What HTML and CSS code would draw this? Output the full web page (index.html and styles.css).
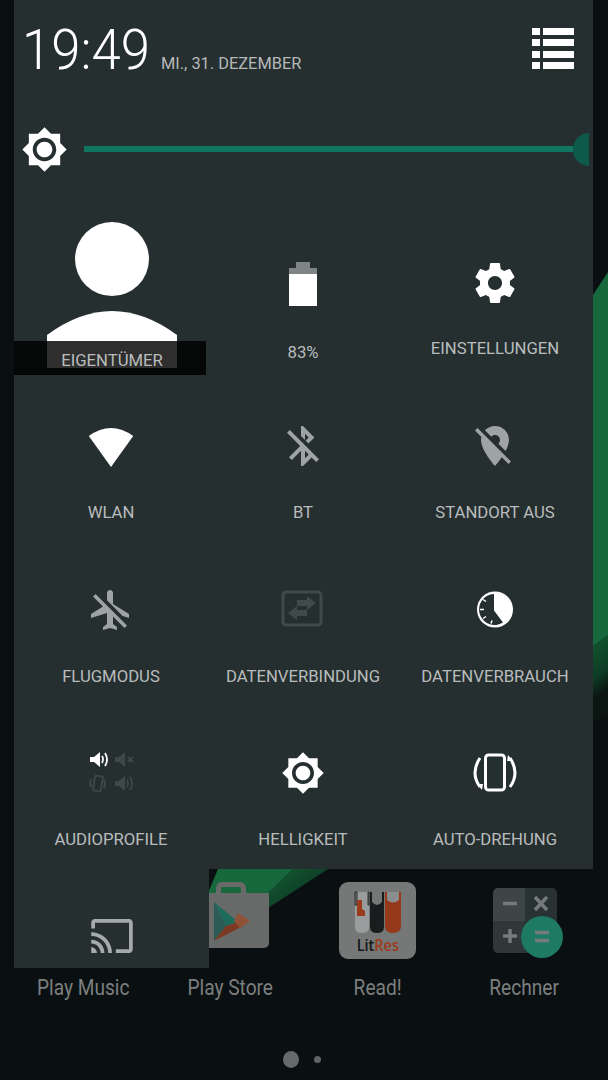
FILE: index.html
```html
<!DOCTYPE html>
<html lang="de">
<head>
<meta charset="utf-8">
<title>Schnelleinstellungen</title>
<link rel="stylesheet" href="styles.css">
</head>
<body>
<div class="screen">
  <svg class="wallpaper" viewBox="0 0 608 1080" width="608" height="1080" aria-hidden="true">
    <defs>
      <linearGradient id="bandShade" gradientUnits="userSpaceOnUse" x1="293" y1="869" x2="320" y2="905">
        <stop offset="0" stop-color="#11522e"/>
        <stop offset=".6" stop-color="#0e3d25"/>
        <stop offset="1" stop-color="#0a1512"/>
      </linearGradient>
    </defs>
    <polygon fill="url(#bandShade)" points="608,635 293,869 268,893 268,908 328,869 608,715"/>
    <polygon fill="#17693d" points="218,869 608,272 608,635 293,869 268,893 208,893"/>
  </svg>

  <main class="home">
    <div class="apps">
      <div class="app">
        <div class="app-icon"></div>
        <span class="app-name">Play Music</span>
      </div>
      <div class="app">
        <div class="app-icon">
          <svg class="store-icon" viewBox="0 0 76 66" width="76" height="66">
            <path class="bag" fill-rule="evenodd" d="M23 11V6a6 6 0 0 1 6-6h18a6 6 0 0 1 6 6v5h23v50a5 5 0 0 1-5 5H0V11zM28 11h20V7a2 2 0 0 0-2-2H30a2 2 0 0 0-2 2z"/>
            <polygon fill="#1d6b5a" points="21,20 45,40 33,44"/>
            <polygon fill="#2c5a55" points="21,20 33,44 21,59"/>
            <polygon fill="#7d3a22" points="21,59 33,44 45,40 50,44"/>
            <polygon fill="#8f5238" points="45,31 57,39 47,46 41,39"/>
          </svg>
        </div>
        <span class="app-name">Play Store</span>
      </div>
      <div class="app">
        <div class="app-icon">
          <div class="litres">
            <svg class="litres-tubes" viewBox="0 0 48 44" width="48" height="44">
              <path fill="#9a9d9d" d="M1 1h14v35q0 6-7 6t-7-6z"/>
              <path fill="#767777" stroke="#2b2e2e" stroke-width="1" d="M1 1v13h2V1zM14 1h1v13h-1z"/>
              <path fill="#9a3c1c" d="M3 9h5v9l3 2v5H3z"/>
              <path fill="#1a1d1e" d="M16 1h14v35q0 6-7 6t-7-6z"/>
              <path fill="#767777" d="M18 1h10v10q-5 6-10 0z"/>
              <path fill="#95391a" d="M31 1h16v34q0 7-8 7t-8-7z"/>
              <path fill="#8a8d8d" d="M33 1h12v8q-6 5-12 0z"/>
            </svg>
            <span class="litres-word">Lit<span class="litres-res">Res</span></span>
          </div>
        </div>
        <span class="app-name">Read!</span>
      </div>
      <div class="app">
        <div class="app-icon">
          <svg class="calc-icon" viewBox="0 0 70 72" width="70" height="72">
            <path fill="#3e4546" d="M5 0h27v33H0V5a5 5 0 0 1 5-5z"/>
            <path fill="#283233" d="M32 0h27a5 5 0 0 1 5 5v28H32z"/>
            <path fill="#2f3738" d="M0 33h32v32H5a5 5 0 0 1-5-5z"/>
            <path fill="#283233" d="M32 33h32v27a5 5 0 0 1-5 5H32z"/>
            <path class="calc-sign" d="M10 15.500h14M42 9l12 13M54 9L42 22M17 41v14M10 48h14"/>
            <circle cx="49" cy="49" r="21" fill="#1e7a62"/>
            <path class="calc-sign" d="M42 44.500h14M42 52.500h14"/>
          </svg>
        </div>
        <span class="app-name">Rechner</span>
      </div>
    </div>
    <div class="pager">
      <span class="dot dot-current"></span>
      <span class="dot"></span>
    </div>
  </main>

  <section class="shade">
    <div class="shade-main">
      <header class="clock-row">
        <span class="time">19:49</span>
        <span class="date">MI., 31. DEZEMBER</span>
        <svg class="list-icon" viewBox="0 0 42 41" width="42" height="41">
          <path d="M0 0h8v7H0zM11 0h31v7H11zM0 11h8v7H0zM11 11h31v7H11zM0 23h8v7H0zM11 23h31v7H11zM0 34h8v7H0zM11 34h31v7H11z"/>
        </svg>
      </header>

      <div class="brightness-row">
        <svg class="sun-icon" viewBox="0 0 24 24" width="47" height="47">
          <path d="M20 8.690V4h-4.690L12 .690 8.690 4H4v4.690L.690 12 4 15.310V20h4.690L12 23.310 15.310 20H20v-4.690L23.310 12 20 8.690zM12 18c-3.310 0-6-2.690-6-6s2.690-6 6-6 6 2.690 6 6-2.690 6-6 6zm0-10c-2.210 0-4 1.790-4 4s1.790 4 4 4 4-1.790 4-4-1.790-4-4-4z"/>
        </svg>
        <div class="track"><span class="thumb"></span></div>
      </div>

      <div class="tiles">
        <div class="tile tile-owner">
          <svg class="owner-icon" viewBox="0 0 130 146" width="130" height="146">
            <circle cx="65" cy="37" r="37"/>
            <path d="M0 113Q65 65 130 113v33H0z"/>
          </svg>
          <span class="owner-bar"><span class="label">EIGENTÜMER</span></span>
        </div>
        <div class="tile tile-battery">
          <svg class="icon" viewBox="0 0 48 48" width="48" height="48">
            <path fill="#7f8585" d="M17 1h14v6h7v7H10V7h7z"/>
            <path d="M10 13h28v32H10z"/>
          </svg>
          <span class="label">83%</span>
        </div>
        <div class="tile tile-settings">
          <svg class="icon" viewBox="0 0 24 24" width="48" height="48">
            <path d="M19.430 12.980c.040-.320.070-.640.070-.980s-.030-.660-.070-.980l2.110-1.650c.190-.150.240-.420.120-.640l-2-3.460c-.120-.220-.390-.300-.610-.220l-2.490 1c-.520-.400-1.080-.730-1.690-.980l-.380-2.650C14.460 2.180 14.250 2 14 2h-4c-.250 0-.460.180-.490.420l-.380 2.650c-.610.250-1.170.590-1.690.980l-2.490-1c-.230-.090-.490 0-.610.220l-2 3.460c-.130.220-.070.490.120.640l2.110 1.650c-.040.320-.070.650-.070.980s.030.660.070.980l-2.110 1.650c-.190.150-.240.420-.120.640l2 3.460c.120.220.390.300.610.220l2.490-1c.520.400 1.080.730 1.690.980l.380 2.650c.030.240.240.420.490.420h4c.250 0 .460-.180.490-.420l.380-2.650c.610-.250 1.170-.590 1.690-.980l2.490 1c.230.090.490 0 .610-.220l2-3.460c.120-.220.070-.490-.120-.640l-2.110-1.650zM12 15.500c-1.930 0-3.500-1.570-3.500-3.500s1.570-3.500 3.500-3.500 3.500 1.570 3.500 3.500-1.570 3.500-3.500 3.500z"/>
          </svg>
          <span class="label">EINSTELLUNGEN</span>
        </div>

        <div class="tile">
          <svg class="icon" viewBox="0 0 48 48" width="48" height="48">
            <path d="M1.800 14Q24-2 46.200 14L24 45z"/>
          </svg>
          <span class="label">WLAN</span>
        </div>
        <div class="tile">
          <svg class="icon icon-off" viewBox="0 0 24 24" width="48" height="48">
            <path d="M13 5.830l1.880 1.880-1.600 1.600 1.410 1.410 3.020-3.020L12 2h-1v5.030l2 2v-3.200zM5.410 4L4 5.410 10.590 12 5 17.590 6.410 19 11 14.410V22h1l4.290-4.290 2.300 2.290L20 18.590 5.410 4zM13 18.170v-3.760l1.880 1.880L13 18.170z"/>
          </svg>
          <span class="label">BT</span>
        </div>
        <div class="tile">
          <svg class="icon icon-off" viewBox="0 0 24 24" width="48" height="48">
            <path d="M12 6.500c1.380 0 2.500 1.120 2.500 2.500 0 .740-.330 1.390-.830 1.850l3.630 3.630c.980-1.860 1.700-3.800 1.700-5.480 0-3.870-3.130-7-7-7-1.980 0-3.760.830-5.040 2.150l3.190 3.190c.460-.520 1.110-.840 1.850-.840zm4.370 9.600l-4.630-4.630-.110-.110L3.270 3 2 4.270l3.180 3.180C5.070 7.950 5 8.470 5 9c0 5.250 7 13 7 13s1.670-1.850 3.380-4.350L18.730 21 20 19.730l-3.630-3.630z"/>
          </svg>
          <span class="label">STANDORT AUS</span>
        </div>

        <div class="tile">
          <svg class="icon icon-off" viewBox="0 0 24 24" width="48" height="48">
            <path d="M13 9V3.500c0-.830-.670-1.500-1.500-1.500S10 2.670 10 3.500v3.680l7.830 7.830L21 16v-2l-8-5zM3 5.270l4.990 4.990L2 14v2l8-2.500V19l-2 1.500V22l3.500-1 3.500 1v-1.500L13 19v-3.730L18.730 21 20 19.730 4.270 4 3 5.270z"/>
          </svg>
          <span class="label">FLUGMODUS</span>
        </div>
        <div class="tile">
          <svg class="icon icon-dim" viewBox="0 0 48 48" width="48" height="48">
            <rect class="dim-frame" x="4" y="6" width="38" height="33" rx="3"/>
            <path d="M18 15h10v-4l9 7-9 7v-4H18zM28 31H18v4l-9-7 9-7v4h10z" transform="translate(0 -1)"/>
          </svg>
          <span class="label">DATENVERBINDUNG</span>
        </div>
        <div class="tile">
          <svg class="icon" viewBox="0 0 48 48" width="48" height="48">
            <circle cx="24" cy="23.500" r="18"/>
            <path class="dial" d="M23 8V24.500l9 12A15.500 15.500 0 1 1 23 8z"/>
            <path class="dial-tick" d="M9 23.500h4M12 13.500l3 2M12 32.500l3-2M20 37.500l1-3"/>
          </svg>
          <span class="label">DATENVERBRAUCH</span>
        </div>

        <div class="tile">
          <svg class="icon audio-icon" viewBox="3 0 48 48" width="48" height="48">
            <g class="audio-on">
              <path d="M6 8h4l6-5v15l-6-5H6z"/>
              <path class="audio-wave" d="M18 7q2 3 0 7M21 4q4 6.500 0 13"/>
            </g>
            <g class="audio-off">
              <path d="M31 8h4l6-5v15l-6-5h-4z"/>
              <path class="audio-wave" d="M44 8l5 5M49 8l-5 5"/>
              <path d="M31 32h4l6-5v15l-6-5h-4z"/>
              <path class="audio-wave" d="M43 31q2 3 0 7M46 28q4 6.500 0 13"/>
              <rect class="audio-wave" x="10" y="27" width="8" height="15" rx="1" transform="rotate(10 14 34)"/>
              <path class="audio-wave" d="M7 30q-2 4 0 8M20 31q2 4 0 8"/>
            </g>
          </svg>
          <span class="label">AUDIOPROFILE</span>
        </div>
        <div class="tile">
          <svg class="icon" viewBox="0 0 24 24" width="44" height="44">
            <path d="M20 8.690V4h-4.690L12 .690 8.690 4H4v4.690L.690 12 4 15.310V20h4.690L12 23.310 15.310 20H20v-4.690L23.310 12 20 8.690zM12 18c-3.310 0-6-2.690-6-6s2.690-6 6-6 6 2.690 6 6-2.690 6-6 6zm0-10c-2.210 0-4 1.790-4 4s1.790 4 4 4 4-1.790 4-4-1.790-4-4-4z"/>
          </svg>
          <span class="label">HELLIGKEIT</span>
        </div>
        <div class="tile">
          <svg class="icon rotate-icon" viewBox="0 0 48 48" width="48" height="48">
            <rect x="14.500" y="6" width="19" height="35" rx="3"/>
            <path d="M9 9Q-1 24 9 38M39 9Q49 24 39 38"/>
            <path class="rotate-tip" d="M6 35l6 0-1 6zM42 12l-6 0 1-6z"/>
          </svg>
          <span class="label">AUTO-DREHUNG</span>
        </div>
      </div>
    </div>

    <div class="shade-extra">
      <svg class="cast-icon" viewBox="1 3 22 18" width="42" height="34">
        <path d="M21 3H3c-1.100 0-2 .900-2 2v3h2V5h18v14h-7v2h7c1.100 0 2-.900 2-2V5c0-1.100-.900-2-2-2zM1 18v3h3c0-1.660-1.340-3-3-3zm0-4v2c2.760 0 5 2.240 5 5h2c0-3.870-3.130-7-7-7zm0-4v2c4.970 0 9 4.030 9 9h2c0-6.080-4.930-11-11-11z"/>
      </svg>
    </div>
  </section>
</div>
</body>
</html>
```

FILE: styles.css
```css
* {
  box-sizing: border-box;
}

html,
body {
  margin: 0;
  padding: 0;
}

body {
  background: #0a1011;
  font-family: Roboto, "Liberation Sans", sans-serif;
}

svg {
  display: block;
}

.screen {
  position: relative;
  width: 608px;
  height: 1080px;
  overflow: hidden;
  background: #0a1011;
}

.wallpaper {
  position: absolute;
  left: 0;
  top: 0;
}

/* Home screen under the shade */
.home {
  position: relative;
  padding: 882px 0 0 10px;
}

.apps {
  display: grid;
  grid-template-columns: repeat(4, 147px);
}

.app {
  display: flex;
  flex-direction: column;
  align-items: center;
}

.app-icon {
  height: 92px;
  display: flex;
  justify-content: center;
  align-items: flex-start;
}

.app-name {
  font-size: 22px;
  line-height: 28px;
  color: #7b7f7f;
  white-space: nowrap;
  transform: scaleX(.87);
}

.bag {
  fill: #686969;
}

.litres {
  width: 77px;
  height: 77px;
  border-radius: 9px;
  background: #767777;
  display: flex;
  flex-direction: column;
  align-items: center;
  padding-top: 9px;
}

.litres-word {
  font-family: "Open Sans", sans-serif;
  font-weight: 600;
  font-size: 17px;
  line-height: 20px;
  color: #111415;
  transform: scaleX(.85);
}

.litres-res {
  color: #9b3a1c;
}

.calc-icon {
  margin: 6px 0 0 6px;
}

.calc-sign {
  fill: none;
  stroke: #757b7b;
  stroke-width: 3.500;
}

.pager {
  display: flex;
  align-items: center;
  gap: 15px;
  margin: 49px 0 0 273px;
}

.dot {
  width: 7px;
  height: 7px;
  border-radius: 50%;
  background: #5f6363;
}

.dot-current {
  width: 16px;
  height: 17px;
  background: #666a6a;
}

/* Quick settings shade */
.shade {
  position: absolute;
  left: 14px;
  top: 0;
  width: 579px;
  display: flex;
  flex-direction: column;
  align-items: flex-start;
}

.shade-main {
  width: 579px;
  height: 869px;
  background: #252f30;
}

.shade-extra {
  width: 195px;
  height: 99px;
  background: #252f30;
  padding: 50px 0 0 77px;
}

.cast-icon {
  fill: #a5aaaa;
}

.clock-row {
  display: flex;
  align-items: flex-start;
  height: 120px;
  padding: 15px 19px 0 8px;
}

.time {
  display: block;
  width: 139px;
  font-size: 56px;
  font-weight: 300;
  line-height: 70px;
  color: #fff;
  transform: scaleX(.94);
  transform-origin: left center;
}

.date {
  margin-top: 39px;
  font-size: 16.400px;
  line-height: 20px;
  color: #b6b9b9;
  white-space: nowrap;
}

.list-icon {
  margin: 13px 0 0 auto;
  fill: #fff;
}

.brightness-row {
  display: flex;
  align-items: center;
  height: 58px;
  padding-left: 7px;
}

.sun-icon {
  fill: #fff;
}

.track {
  position: relative;
  width: 491px;
  height: 6px;
  margin-left: 16px;
  background: #0f7460;
}

.thumb {
  position: absolute;
  left: 489px;
  top: -13.500px;
  width: 16px;
  height: 33px;
  border-radius: 16px 0 0 16px;
  background: #0e5a4a;
}

.tiles {
  display: grid;
  grid-template-columns: repeat(3, 192px);
  grid-auto-rows: 163.500px;
  margin-top: 26.500px;
  padding-left: 1px;
}

.tile {
  position: relative;
  display: flex;
  flex-direction: column;
  align-items: center;
  padding-top: 54px;
  fill: #fff;
}

.icon {
  flex: none;
  height: 48px;
}

.icon-off {
  fill: #9ea3a3;
}

.icon-dim {
  fill: #414a4b;
}

.dim-frame {
  fill: none;
  stroke: #414a4b;
  stroke-width: 3;
}

.label {
  display: block;
  margin-top: 31px;
  font-size: 16.700px;
  line-height: 24px;
  color: #b9bcbc;
  white-space: nowrap;
}

.tile-settings .label {
  margin-top: 30px;
}

.tile-battery {
  padding-top: 56px;
}

.tile-battery .label {
  margin-top: 32px;
}

.tile-owner {
  padding-top: 17.500px;
}

.owner-icon {
  margin-left: 2px;
}

.owner-bar {
  position: absolute;
  left: -1px;
  top: 136.500px;
  width: 192px;
  height: 34px;
  background: rgba(0, 0, 0, .82);
  display: flex;
  justify-content: center;
  align-items: center;
}

.owner-bar .label {
  margin: 6px 0 0 4px;
}

.dial {
  fill: #252f30;
}

.dial-tick {
  fill: none;
  stroke: #fff;
  stroke-width: 1.500;
}

.audio-on {
  fill: #fff;
}

.audio-off {
  fill: #3f4849;
}

.audio-wave {
  fill: none;
  stroke-width: 1.800;
}

.audio-on .audio-wave {
  stroke: #fff;
}

.audio-off .audio-wave {
  stroke: #3f4849;
}

.audio-icon {
  overflow: visible;
}

.rotate-icon {
  fill: none;
  stroke: #fff;
  stroke-width: 3;
}

.rotate-tip {
  fill: #fff;
  stroke: none;
}
```
